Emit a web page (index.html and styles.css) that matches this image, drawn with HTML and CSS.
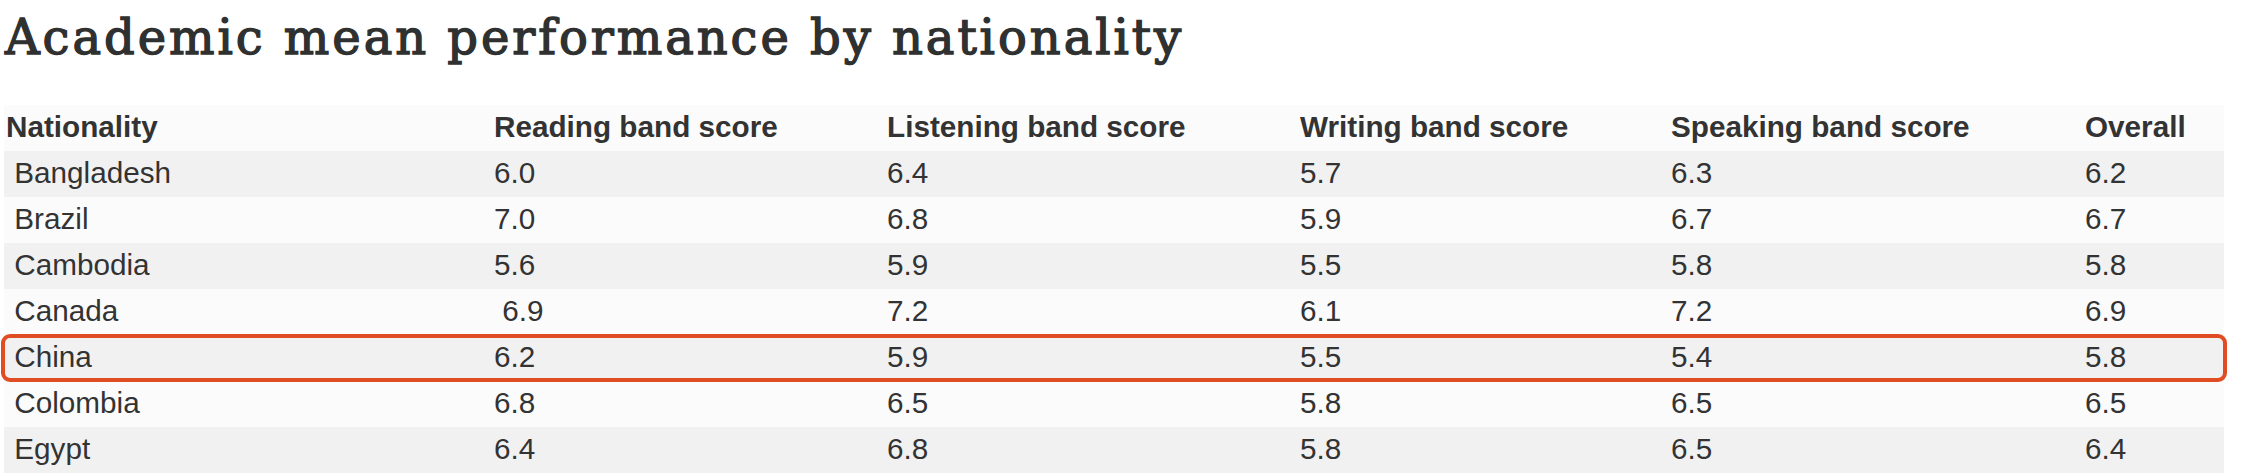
FILE: index.html
```html
<!DOCTYPE html>
<html lang="en">
<head>
<meta charset="utf-8">
<title>Academic mean performance by nationality</title>
<link rel="stylesheet" href="styles.css">
</head>
<body>
<h1 class="title">Academic mean performance by nationality</h1>
<div class="table-wrap">
  <table class="scores">
    <colgroup>
      <col class="c-nat">
      <col class="c-read">
      <col class="c-listen">
      <col class="c-write">
      <col class="c-speak">
      <col class="c-overall">
    </colgroup>
    <thead>
      <tr>
        <th>Nationality</th>
        <th>Reading band score</th>
        <th>Listening band score</th>
        <th>Writing band score</th>
        <th>Speaking band score</th>
        <th>Overall</th>
      </tr>
    </thead>
    <tbody>
      <tr><td>&nbsp;Bangladesh</td><td>6.0</td><td>6.4</td><td>5.7</td><td>6.3</td><td>6.2</td></tr>
      <tr><td>&nbsp;Brazil</td><td>7.0</td><td>6.8</td><td>5.9</td><td>6.7</td><td>6.7</td></tr>
      <tr><td>&nbsp;Cambodia</td><td>5.6</td><td>5.9</td><td>5.5</td><td>5.8</td><td>5.8</td></tr>
      <tr><td>&nbsp;Canada</td><td>&nbsp;6.9</td><td>7.2</td><td>6.1</td><td>7.2</td><td>6.9</td></tr>
      <tr><td>&nbsp;China</td><td>6.2</td><td>5.9</td><td>5.5</td><td>5.4</td><td>5.8</td></tr>
      <tr><td>&nbsp;Colombia</td><td>6.8</td><td>6.5</td><td>5.8</td><td>6.5</td><td>6.5</td></tr>
      <tr><td>&nbsp;Egypt</td><td>6.4</td><td>6.8</td><td>5.8</td><td>6.5</td><td>6.4</td></tr>
    </tbody>
  </table>
  <div class="highlight"></div>
</div>
</body>
</html>
```

FILE: styles.css
```css
html, body {
  margin: 0;
  padding: 0;
  background: #ffffff;
}

body {
  width: 2253px;
  height: 476px;
  overflow: hidden;
}

.title {
  margin: 9px 0 0 5px;
  font-family: "DejaVu Serif", serif;
  font-size: 48px;
  font-weight: normal;
  line-height: 56px;
  letter-spacing: 2.95px;
  color: #2f3030;
  -webkit-text-stroke: 1.4px #2f3030;
}

.table-wrap {
  position: relative;
  margin: 40px 0 0 4px;
  width: 2220px;
}

.scores {
  width: 2220px;
  table-layout: fixed;
  border-collapse: collapse;
  border-spacing: 0;
  font-family: "Liberation Sans", Arial, sans-serif;
  font-size: 29.7px;
  color: #333333;
}

.c-nat { width: 488px; }
.c-read { width: 393px; }
.c-listen { width: 413px; }
.c-write { width: 371px; }
.c-speak { width: 414px; }
.c-overall { width: 141px; }

.scores th,
.scores td {
  padding: 0 0 2px 2px;
  height: 44px;
  line-height: 44px;
  text-align: left;
  white-space: nowrap;
  vertical-align: top;
}

.scores th {
  font-weight: bold;
}

.scores thead tr {
  background: #fbfbfc;
}

.scores tbody tr:nth-child(odd) {
  background: #f1f1f2;
}

.scores tbody tr:nth-child(even) {
  background: #fbfbfc;
}

.highlight {
  position: absolute;
  left: -3px;
  top: 229px;
  width: 2226px;
  height: 48px;
  box-sizing: border-box;
  border: 4px solid #e04d22;
  border-radius: 9px;
  pointer-events: none;
}
```
